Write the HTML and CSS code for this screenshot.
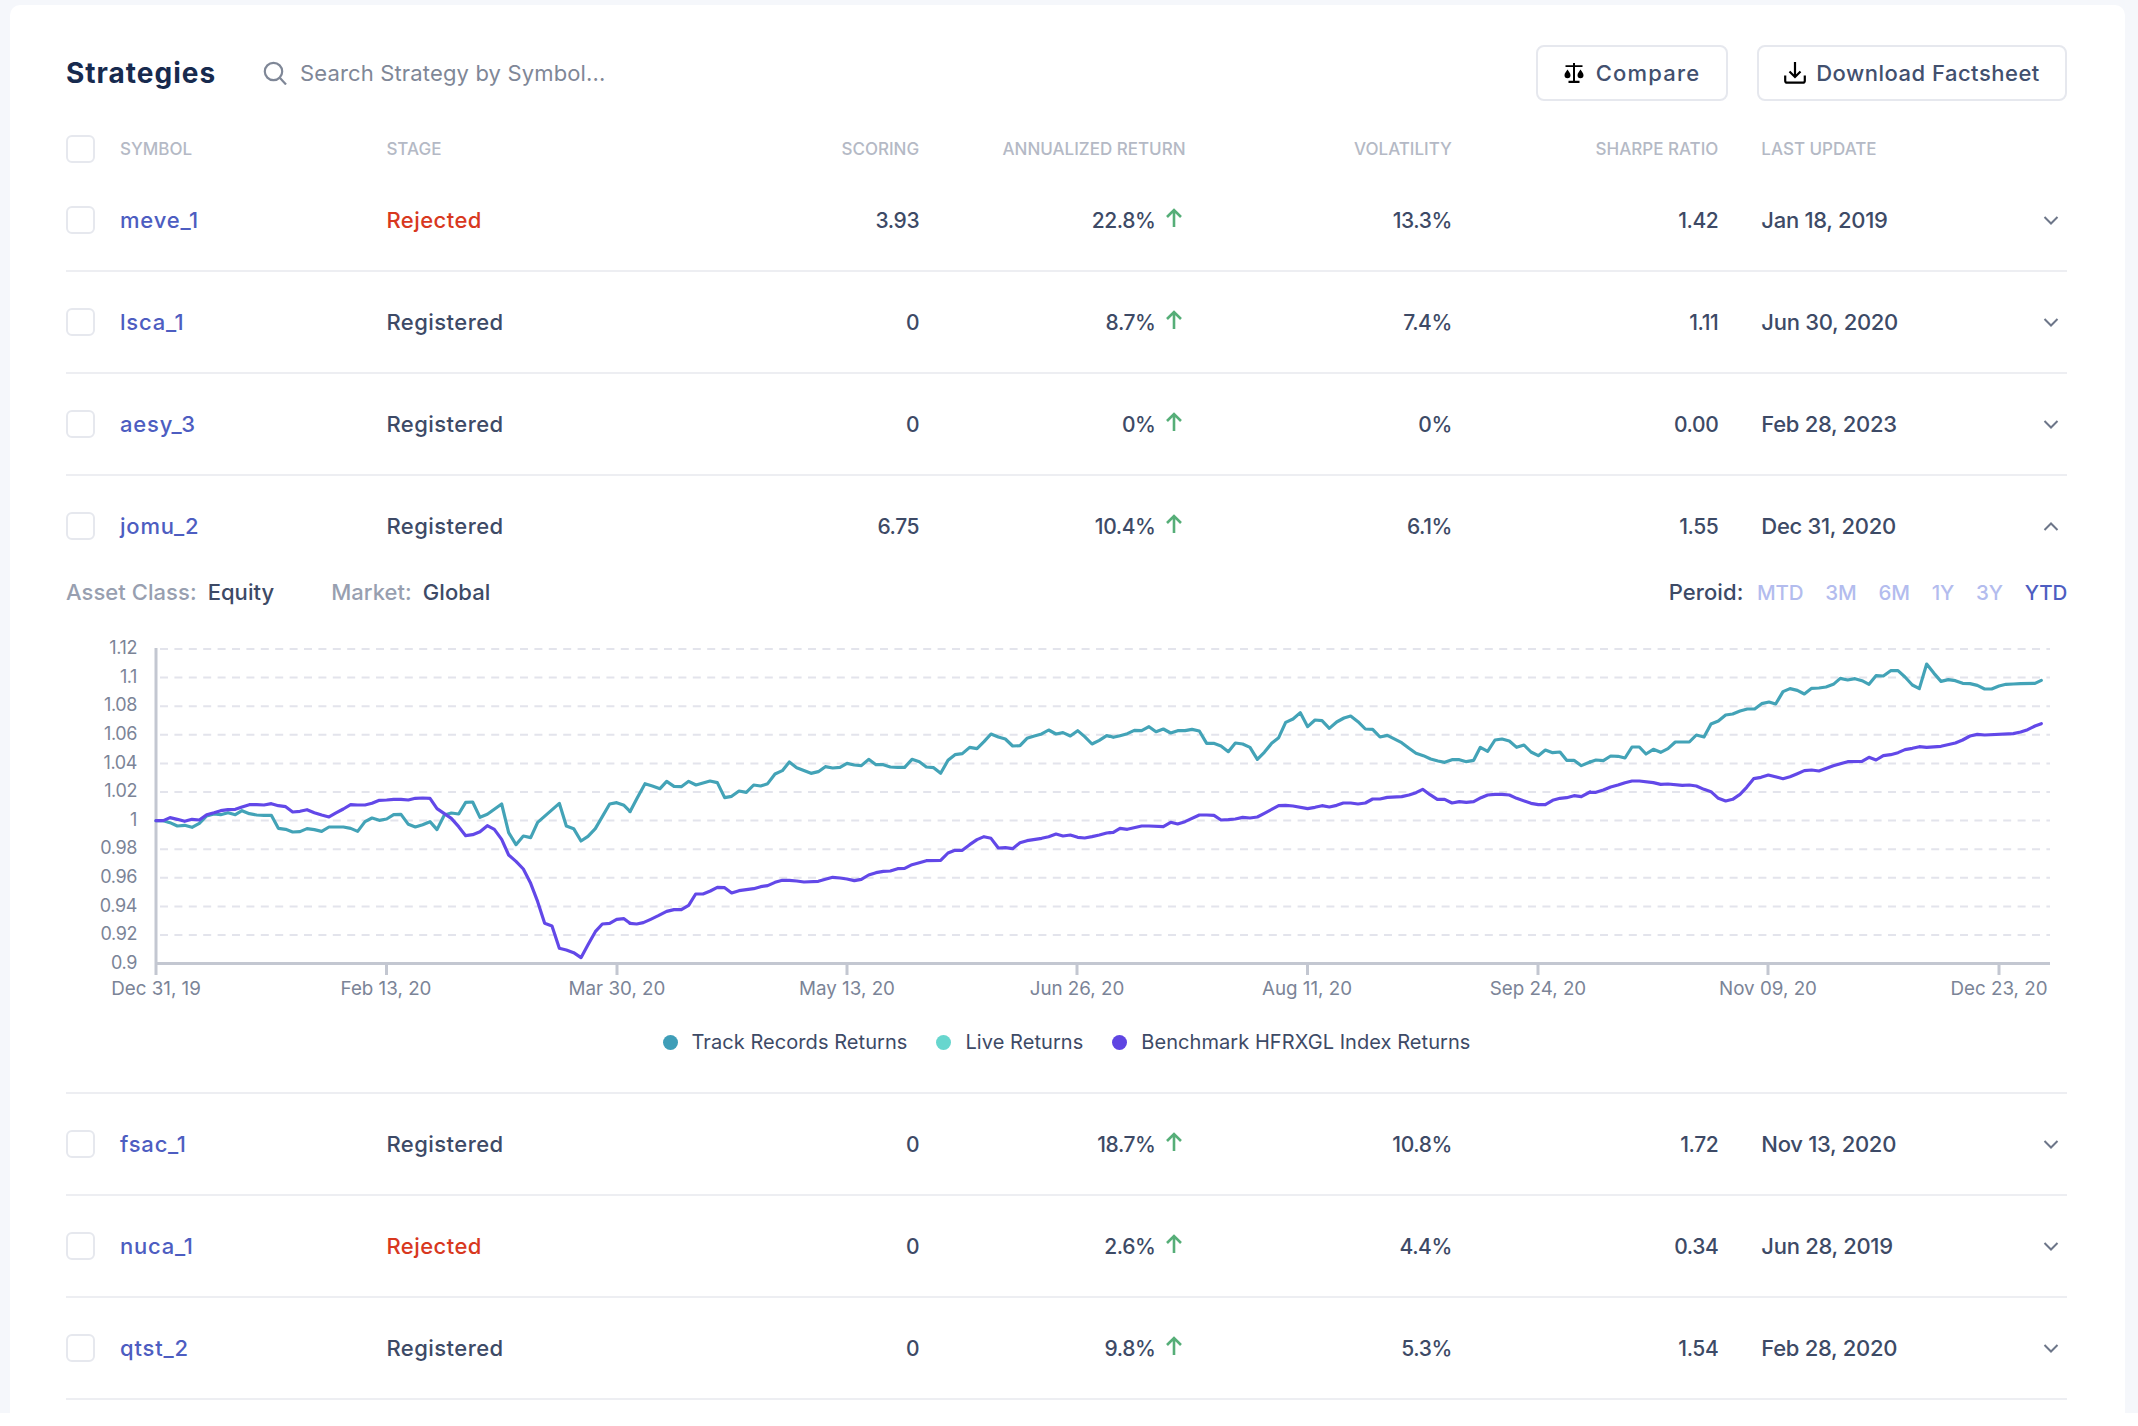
FILE: index.html
```html
<!DOCTYPE html>
<html lang="en">
<head>
  <meta charset="UTF-8">
  <title>Strategies</title>
  <link rel="stylesheet" href="styles.css">
</head>
<body>
<div class="page">
  <div class="card">

    <div class="toolbar">
      <h1 class="title">Strategies</h1>
      <div class="search">
        <svg class="search-icon" width="24" height="24" viewBox="0 0 24 24"><circle cx="10.5" cy="10.5" r="8.7"/><path d="M17 17l6 6.5"/></svg>
        <span>Search Strategy by Symbol...</span>
      </div>
      <button class="btn btn-compare" type="button">
        <svg width="20" height="21" viewBox="0 0 20 21"><path d="M9 0h2v2.200h7.500V4H11v13.800h4.500V20h-11v-2.200H9V4H1.500V2.200H9z" fill="#000"/><path d="M3.500 6.500c1.300 2.200 3 3.800 3 5.800a3 3 0 0 1-6 0c0-2 1.700-3.600 3-5.800zM16.500 6.500c1.300 2.200 3 3.800 3 5.800a3 3 0 0 1-6 0c0-2 1.700-3.600 3-5.800z" fill="#000"/></svg>
        Compare
      </button>
      <button class="btn btn-download" type="button">
        <svg width="22" height="22" viewBox="0 0 22 22" fill="none" stroke="#000" stroke-width="2.200"><path d="M11 0v14.500M5.500 9.500l5.500 5.500 5.500-5.500"/><path d="M1.200 13.500v5.200a2 2 0 0 0 2 2h15.600a2 2 0 0 0 2-2v-5.200"/></svg>
        Download Factsheet
      </button>
    </div>

    <div class="grid head">
      <div class="check"></div>
      <div>SYMBOL</div>
      <div>STAGE</div>
      <div class="num">SCORING</div>
      <div class="num">ANNUALIZED RETURN</div>
      <div class="num">VOLATILITY</div>
      <div class="num">SHARPE RATIO</div>
      <div class="updated">LAST UPDATE</div>
    </div>

    <div class="grid row">
      <div class="check"></div>
      <a class="symbol">meve_1</a>
      <div class="stage rejected">Rejected</div>
      <div class="num">3.93</div>
      <div class="num ret">22.8%<svg class="arrow" viewBox="0 0 18 20"><path d="M9 19V2M2 9l7-7 7 7"/></svg></div>
      <div class="num">13.3%</div>
      <div class="num">1.42</div>
      <div class="updated">Jan 18, 2019<svg class="chev" viewBox="0 0 16 9"><path d="M1.500 1l6.500 6.500L14.500 1"/></svg></div>
    </div>

    <div class="grid row">
      <div class="check"></div>
      <a class="symbol">lsca_1</a>
      <div class="stage">Registered</div>
      <div class="num">0</div>
      <div class="num ret">8.7%<svg class="arrow" viewBox="0 0 18 20"><path d="M9 19V2M2 9l7-7 7 7"/></svg></div>
      <div class="num">7.4%</div>
      <div class="num">1.11</div>
      <div class="updated">Jun 30, 2020<svg class="chev" viewBox="0 0 16 9"><path d="M1.500 1l6.500 6.500L14.500 1"/></svg></div>
    </div>

    <div class="grid row">
      <div class="check"></div>
      <a class="symbol">aesy_3</a>
      <div class="stage">Registered</div>
      <div class="num">0</div>
      <div class="num ret">0%<svg class="arrow" viewBox="0 0 18 20"><path d="M9 19V2M2 9l7-7 7 7"/></svg></div>
      <div class="num">0%</div>
      <div class="num">0.00</div>
      <div class="updated">Feb 28, 2023<svg class="chev" viewBox="0 0 16 9"><path d="M1.500 1l6.500 6.500L14.500 1"/></svg></div>
    </div>

    <div class="grid row open">
      <div class="check"></div>
      <a class="symbol">jomu_2</a>
      <div class="stage">Registered</div>
      <div class="num">6.75</div>
      <div class="num ret">10.4%<svg class="arrow" viewBox="0 0 18 20"><path d="M9 19V2M2 9l7-7 7 7"/></svg></div>
      <div class="num">6.1%</div>
      <div class="num">1.55</div>
      <div class="updated">Dec 31, 2020<svg class="chev" viewBox="0 0 16 9"><path d="M1.500 8l6.500-6.500L14.500 8"/></svg></div>
    </div>

    <div class="detail">
      <div class="detail-bar">
        <span class="meta-key">Asset Class:</span><span class="meta-val">Equity</span>
        <span class="meta-key market">Market:</span><span class="meta-val">Global</span>
        <div class="periods">
          <span class="period-label">Peroid:</span>
          <a>MTD</a><a>3M</a><a>6M</a><a>1Y</a><a>3Y</a><a class="active">YTD</a>
        </div>
      </div>

      <svg class="chart" width="2001" height="370" viewBox="66 630 2001 370">
        <g class="grid-lines">
          <path d="M160 649H2050M160 677.600H2050M160 706.200H2050M160 734.800H2050M160 763.400H2050M160 792H2050M160 820.600H2050M160 849.200H2050M160 877.800H2050M160 906.400H2050M160 935H2050"/>
        </g>
        <path class="axis" d="M156 648V975M156 963.500H2050M386.500 963.500V975M617 963.500V975M847 963.500V975M1077 963.500V975M1307.500 963.500V975M1538 963.500V975M1768 963.500V975M1999 963.500V975"/>

        <g class="y-labels">
          <text x="137" y="654">1.12</text>
          <text x="137" y="683">1.1</text>
          <text x="137" y="711">1.08</text>
          <text x="137" y="740">1.06</text>
          <text x="137" y="769">1.04</text>
          <text x="137" y="797">1.02</text>
          <text x="137" y="826">1</text>
          <text x="137" y="854">0.98</text>
          <text x="137" y="883">0.96</text>
          <text x="137" y="912">0.94</text>
          <text x="137" y="940">0.92</text>
          <text x="137" y="969">0.9</text>
        </g>
        <g class="x-labels">
          <text x="156" y="995">Dec 31, 19</text>
          <text x="386" y="995">Feb 13, 20</text>
          <text x="617" y="995">Mar 30, 20</text>
          <text x="847" y="995">May 13, 20</text>
          <text x="1077" y="995">Jun 26, 20</text>
          <text x="1307" y="995">Aug 11, 20</text>
          <text x="1538" y="995">Sep 24, 20</text>
          <text x="1768" y="995">Nov 09, 20</text>
          <text x="1999" y="995">Dec 23, 20</text>
        </g>

        <g class="line teal">
          <polyline transform="translate(150 770) scale(.33333)" points="18,152 40,152 60,158 82,168 104,166 126,172 148,160 170,138 192,132 212,134 234,128 256,134 276,122 298,131 320,135 342,136 364,136 385,175 407,178 428,186 450,185 471,176 493,179 515,184 537,171 558,171 580,171 602,175 623,184 645,155 666,144 688,151 710,147 731,134 753,133 775,163 796,171 818,164 840,155 861,179 883,135 904,129 926,132 947,97 968,96 990,142 1012,133 1055,102 1076,188 1098,224 1120,198 1142,203 1163,157 1228,100 1249,168 1271,176 1293,213 1314,199 1336,176 1379,102 1400,98 1422,106 1440,124"/>
          <polyline transform="translate(630 700) scale(.33333)" points="0,335 22,293 45,251 67,258 90,266 110,244 132,259 154,260 176,244 198,255 240,243 262,248 284,293 305,289 327,273 349,277 371,255 392,258 413,251 435,222 457,212 478,186 500,203 543,220 565,215 586,200 608,204 630,202 651,190 673,195 694,197 716,178 738,194 760,194 781,201 803,202 824,202 846,178 868,185 889,201 911,203 932,220 954,181 975,164 997,161 1019,142 1041,146 1062,125 1083,102 1105,111 1126,117 1148,138 1170,137 1191,115 1213,108 1235,102 1256,90 1278,102 1299,98 1321,108 1343,92 1364,110 1386,132 1408,121 1430,107 1440,109"/>
          <polyline transform="translate(1110 690) scale(.33333)" points="0,139 10,142 30,137 52,131 73,121 95,122 117,110 138,125 160,117 182,129 203,122 225,122 246,118 268,123 290,160 311,160 333,168 355,185 376,159 398,162 420,172 442,208 463,187 485,160 506,143 527,97 549,87 571,68 593,110 615,90 636,92 658,115 680,96 702,84 722,78 744,95 766,117 788,118 810,141 832,136 875,158 897,175 918,190 940,197 962,207 984,213 1004,217 1026,209 1048,209 1069,215 1091,211 1111,172 1133,184 1155,150 1176,147 1198,153 1220,172 1242,165 1263,186 1285,197 1306,180 1328,188 1350,186 1370,211 1392,211 1414,227 1440,216"/>
          <polyline transform="translate(1590 650) scale(.33333)" points="0,336 18,330 40,332 62,318 84,319 105,324 126,291 148,291 168,312 190,298 212,307 234,296 256,276 277,276 298,276 319,255 342,261 363,222 385,213 407,195 428,192 450,183 472,177 494,177 515,161 537,156 557,162 579,125 600,116 622,121 643,132 665,115 687,114 708,111 730,103 751,85 773,90 795,86 816,92 837,103 858,77 880,78 902,62 924,62 945,81 967,105 988,116 1010,42 1032,70 1053,94 1075,89 1096,92 1118,100 1140,101 1162,106 1184,117 1205,117 1227,108 1248,103 1270,102 1292,101 1335,100 1354,91"/>
        </g>
        <g class="line purple">
          <polyline transform="translate(150 770) scale(.33333)" points="18,152 40,152 60,143 82,148 104,154 126,148 148,150 170,134 192,128 212,122 234,119 256,118 276,111 298,104 320,104 342,105 364,101 385,107 407,110 428,126 450,124 471,119 493,128 515,135 537,141 558,129 580,117 602,104 623,105 645,105 666,100 688,91 710,90 731,88 753,88 775,90 796,85 818,84 840,85 861,116 883,131 904,145 926,170 947,197 968,194 990,185 1012,167 1033,178 1055,208 1076,255 1098,274 1120,297 1142,340 1163,395 1184,460 1206,468 1228,535 1249,540 1271,548 1293,563 1314,524 1336,485 1357,462 1379,460 1400,448 1422,446 1440,460"/>
          <polyline transform="translate(630 700) scale(.33333)" points="0,670 20,672 40,668 62,658 85,647 110,634 132,629 154,629 176,616 197,582 219,582 241,573 262,562 284,563 305,579 327,572 349,569 371,566 392,560 413,557 435,547 457,541 478,541 500,543 522,546 565,544 586,538 608,532 630,534 651,537 673,542 694,538 716,525 738,518 760,514 781,513 803,506 824,505 846,494 868,488 889,482 932,481 954,459 975,451 997,451 1019,434 1041,419 1062,410 1083,415 1105,444 1126,443 1148,446 1170,428 1191,422 1235,415 1256,410 1278,402 1299,408 1321,405 1343,412 1364,414 1386,410 1408,405 1430,399 1440,398"/>
          <polyline transform="translate(1110 690) scale(.33333)" points="0,428 10,427 30,415 52,418 95,408 117,408 160,410 182,397 203,402 225,395 268,375 290,375 312,376 333,390 355,389 376,387 398,382 420,384 442,381 463,370 506,347 527,346 549,348 593,356 615,352 636,347 658,351 680,346 700,339 722,339 744,342 766,339 788,327 810,327 832,322 875,320 897,315 918,308 938,298 960,314 982,328 1004,328 1026,339 1048,335 1069,337 1091,335 1113,323 1133,315 1155,313 1176,313 1198,315 1220,325 1263,340 1285,344 1306,344 1328,331 1350,325 1370,323 1392,317 1414,320 1440,306"/>
          <polyline transform="translate(1590 650) scale(.33333)" points="0,427 18,427 40,420 62,411 84,405 105,398 126,393 148,393 190,398 212,403 234,402 277,406 298,405 319,408 342,418 363,425 385,445 407,453 428,448 450,433 470,412 491,386 513,382 535,375 579,386 600,380 622,371 643,362 665,360 687,363 730,347 773,335 816,334 837,322 858,330 880,317 902,314 924,308 945,299 967,295 988,290 1010,292 1053,289 1096,279 1118,270 1140,258 1162,253 1184,255 1270,251 1292,246 1313,239 1335,228 1354,221"/>
        </g>
      </svg>

      <div class="legend">
        <span class="legend-item"><i class="dot dot-track"></i>Track Records Returns</span>
        <span class="legend-item"><i class="dot dot-live"></i>Live Returns</span>
        <span class="legend-item"><i class="dot dot-bench"></i>Benchmark HFRXGL Index Returns</span>
      </div>
    </div>

    <div class="grid row">
      <div class="check"></div>
      <a class="symbol">fsac_1</a>
      <div class="stage">Registered</div>
      <div class="num">0</div>
      <div class="num ret">18.7%<svg class="arrow" viewBox="0 0 18 20"><path d="M9 19V2M2 9l7-7 7 7"/></svg></div>
      <div class="num">10.8%</div>
      <div class="num">1.72</div>
      <div class="updated">Nov 13, 2020<svg class="chev" viewBox="0 0 16 9"><path d="M1.500 1l6.500 6.500L14.500 1"/></svg></div>
    </div>

    <div class="grid row">
      <div class="check"></div>
      <a class="symbol">nuca_1</a>
      <div class="stage rejected">Rejected</div>
      <div class="num">0</div>
      <div class="num ret">2.6%<svg class="arrow" viewBox="0 0 18 20"><path d="M9 19V2M2 9l7-7 7 7"/></svg></div>
      <div class="num">4.4%</div>
      <div class="num">0.34</div>
      <div class="updated">Jun 28, 2019<svg class="chev" viewBox="0 0 16 9"><path d="M1.500 1l6.500 6.500L14.500 1"/></svg></div>
    </div>

    <div class="grid row">
      <div class="check"></div>
      <a class="symbol">qtst_2</a>
      <div class="stage">Registered</div>
      <div class="num">0</div>
      <div class="num ret">9.8%<svg class="arrow" viewBox="0 0 18 20"><path d="M9 19V2M2 9l7-7 7 7"/></svg></div>
      <div class="num">5.3%</div>
      <div class="num">1.54</div>
      <div class="updated">Feb 28, 2020<svg class="chev" viewBox="0 0 16 9"><path d="M1.500 1l6.500 6.500L14.500 1"/></svg></div>
    </div>

  </div>
</div>
</body>
</html>
```

FILE: styles.css
```css
* {
  margin: 0;
  padding: 0;
  box-sizing: border-box;
}

body {
  background-color: #fff;
  font-family: Inter, "Open Sans", sans-serif;
  font-size: 21px;
  font-weight: 500;
  color: #3d4a66;
  height: 1426px;
  overflow: hidden;
}

.page {
  height: 1413px;
  padding: 5px 13px 0 10px;
  background-color: #f5f7fb;
  overflow: hidden;
}

.card {
  height: 100%;
  padding: 40px 58px 0 56px;
  background-color: #fff;
  border-radius: 10px 10px 0 0;
}

.toolbar {
  display: flex;
  align-items: center;
  height: 56px;
}

.title {
  width: 197px;
  font-size: 28px;
  font-weight: 700;
  letter-spacing: 1px;
  color: #172a4e;
}

.search {
  display: flex;
  align-items: center;
  flex: 1;
  gap: 13px;
  color: #7f8797;
  font-size: 22px;
  font-weight: 400;
  letter-spacing: .15px;
}

.search-icon {
  fill: none;
  stroke: #7f8797;
  stroke-width: 2.2;
}

.btn {
  display: flex;
  align-items: center;
  justify-content: center;
  height: 56px;
  background-color: #fff;
  border: 2px solid #e6e8ee;
  border-radius: 8px;
  color: #42506e;
  font-family: inherit;
  font-size: 22px;
  font-weight: 500;
}

.btn-compare {
  width: 192px;
  gap: 12px;
  letter-spacing: 1.2px;
}

.btn-download {
  width: 310px;
  margin-left: 29px;
  gap: 10px;
  letter-spacing: .5px;
}

.grid {
  display: grid;
  grid-template-columns: 54px repeat(6, 266.4px) 1fr;
  align-items: center;
}

.head {
  height: 69px;
  padding-top: 27px;
  font-size: 17px;
  font-weight: 500;
  color: #b4b9c5;
}

.row {
  height: 102px;
  border-bottom: 2px solid #edeef2;
}

.row.open {
  height: 100px;
  border-bottom: none;
}

.check {
  width: 29px;
  height: 28px;
  border: 2px solid #e6e8ee;
  border-radius: 6px;
}

.symbol {
  color: #4d5dc1;
  font-size: 22px;
  letter-spacing: .8px;
}

.stage {
  font-size: 22px;
  letter-spacing: .45px;
}

.rejected {
  color: #d8381e;
}

.num {
  text-align: right;
  letter-spacing: -.4px;
}

.head .num {
  letter-spacing: 0;
}

.ret {
  display: flex;
  justify-content: flex-end;
  align-items: center;
}

.arrow {
  width: 18px;
  height: 20px;
  margin: -4px 3px 0 9px;
  fill: none;
  stroke: #56ae78;
  stroke-width: 2.6;
}

.updated {
  display: flex;
  justify-content: space-between;
  align-items: center;
  padding: 0 8px 0 43px;
  white-space: nowrap;
  font-size: 22px;
  letter-spacing: -.3px;
}

.head .updated {
  font-size: 17px;
  letter-spacing: 0;
}

.chev {
  width: 16px;
  height: 9px;
  fill: none;
  stroke: #6d7689;
  stroke-width: 2;
}

.detail {
  height: 518px;
  border-bottom: 2px solid #edeef2;
}

.detail-bar {
  display: flex;
  align-items: center;
  height: 32px;
  font-size: 22px;
  letter-spacing: .05px;
}

.meta-key {
  color: #989fb0;
  margin-right: 11px;
}

.market {
  margin-left: 57px;
}

.meta-val {
  color: #3d4a66;
}

.periods {
  display: flex;
  align-items: center;
  margin-left: auto;
  gap: 22px;
  font-size: 20.500px;
  letter-spacing: -.2px;
  color: #b3bcee;
}

.period-label {
  color: #3d4a66;
  margin-right: -8.500px;
  font-size: 22px;
  letter-spacing: .1px;
}

.periods .active {
  color: #4d5dc1;
}

.chart {
  display: block;
  margin-top: 22px;
}

.grid-lines path {
  fill: none;
  stroke: #e3e4ec;
  stroke-width: 2;
  stroke-dasharray: 8 6.400;
}

.axis {
  fill: none;
  stroke: #c3c7d1;
  stroke-width: 3;
}

.y-labels text,
.x-labels text {
  font-size: 18px;
  font-weight: 400;
  fill: #7b8497;
}

.y-labels text {
  text-anchor: end;
  letter-spacing: -.4px;
}

.x-labels text {
  text-anchor: middle;
  font-size: 18.800px;
}

.line polyline {
  fill: none;
  stroke-width: 9.500;
  stroke-linejoin: round;
  stroke-linecap: round;
}

.teal polyline {
  stroke: #43a3b7;
}

.purple polyline {
  stroke: #6248e8;
}

.legend {
  display: flex;
  justify-content: center;
  align-items: center;
  gap: 29px;
  margin-top: 27px;
  height: 30px;
  font-size: 20px;
  font-weight: 400;
  letter-spacing: .06px;
}

.legend-item {
  display: flex;
  align-items: center;
  gap: 14px;
}

.dot {
  width: 15px;
  height: 15px;
  border-radius: 50%;
}

.dot-track {
  background-color: #3f9eb8;
}

.dot-live {
  background-color: #67d6ce;
}

.dot-bench {
  background-color: #5f45e2;
}
```
